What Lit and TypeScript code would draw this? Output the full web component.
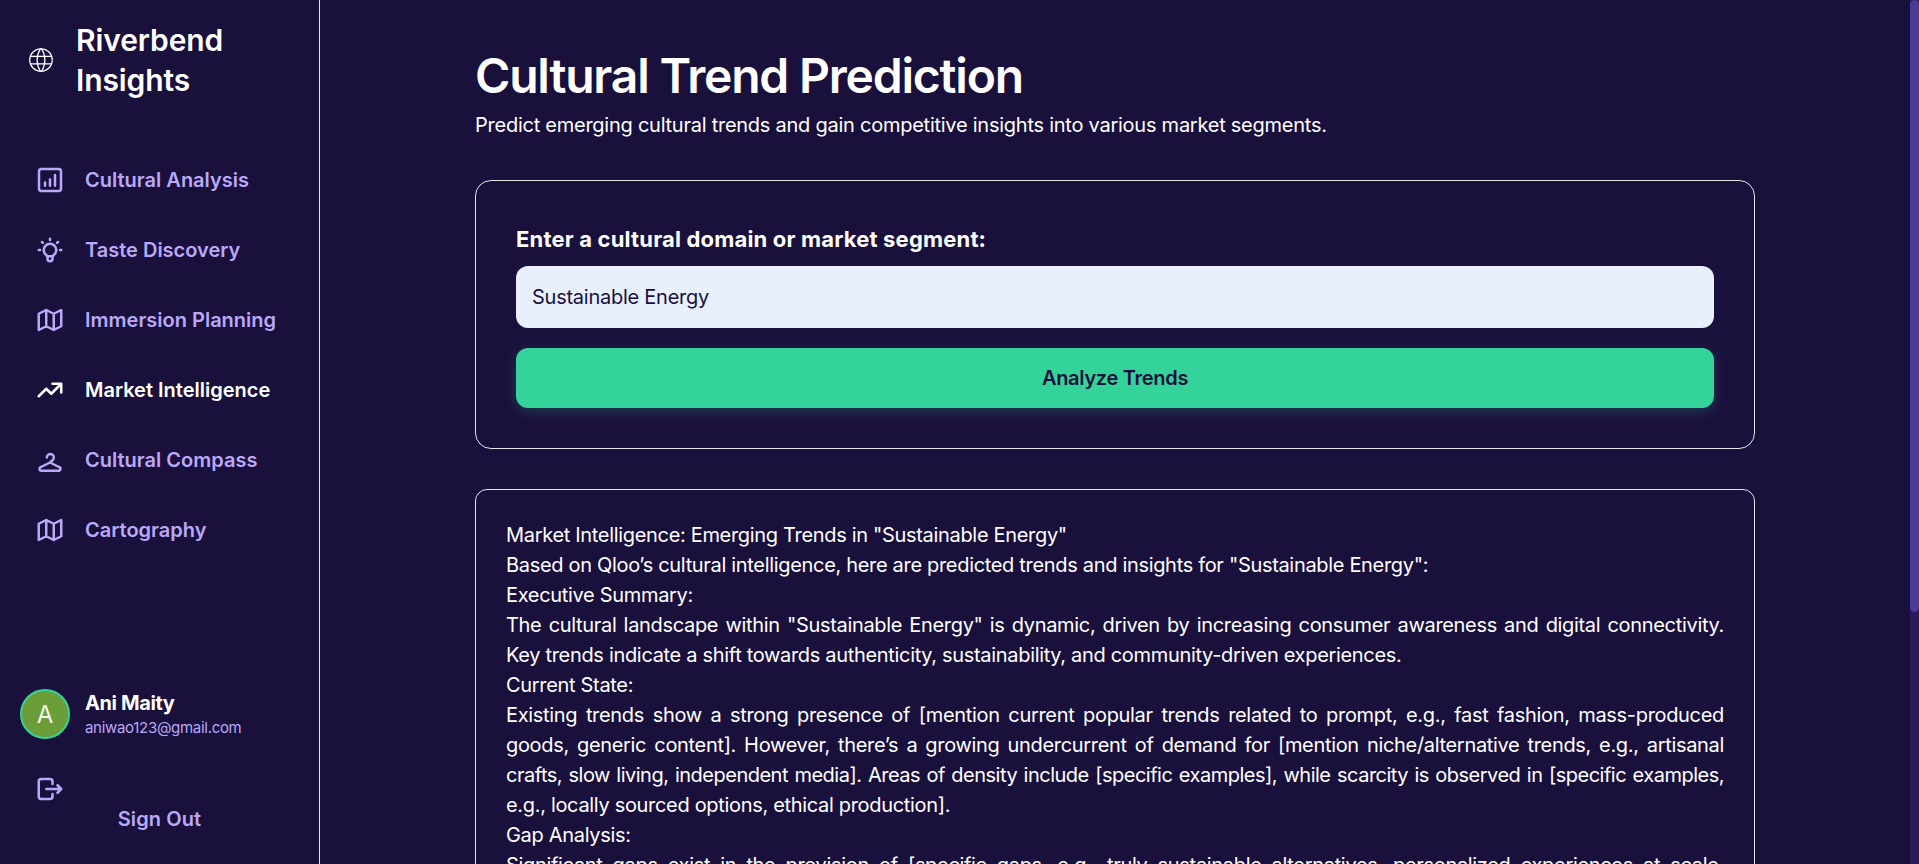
import { LitElement, css, html, svg } from "lit";
import { customElement } from "lit/decorators.js";

const icons = {
  globe: svg`<circle cx="12" cy="12" r="9"/><path d="M3.6 9h16.8M3.6 15h16.8M11.5 3a17 17 0 0 0 0 18M12.5 3a17 17 0 0 1 0 18"/>`,
  chart: svg`<rect x="3.2" y="3.2" width="17.6" height="17.6" rx="2"/><path d="M8 16.5v-2.5M12 16.5v-5M16 16.5V8"/>`,
  bulb: svg`<path d="M3 12h1m8-9v1m8 8h1M5.6 5.6l.7.7m12.1-.7-.7.7M9 16a5 5 0 1 1 6 0 3.5 3.5 0 0 0-1 3 2 2 0 0 1-4 0 3.5 3.5 0 0 0-1-3M9.7 17h4.6"/>`,
  map: svg`<path d="M3 7l6-3 6 3 6-3v13l-6 3-6-3-6 3V7M9 4v13M15 7v13"/>`,
  trend: svg`<path d="M3 17l6-6 4 4 8-8M14 7h7v7"/>`,
  hanger: svg`<path d="M9.5 10a2.8 2.8 0 1 1 4.5 2.2L12 14l-7.2 3.6a1.4 1.4 0 0 0 .6 2.9h13.2a1.4 1.4 0 0 0 .6-2.9L12 14"/>`,
  logout: svg`<path d="M14 8V6a2 2 0 0 0-2-2H5a2 2 0 0 0-2 2v12a2 2 0 0 0 2 2h7a2 2 0 0 0 2-2v-2M9 12h12l-3-3m0 6 3-3"/>`,
};

const nav = [
  { label: "Cultural Analysis", icon: icons.chart },
  { label: "Taste Discovery", icon: icons.bulb },
  { label: "Immersion Planning", icon: icons.map },
  { label: "Market Intelligence", icon: icons.trend, active: true },
  { label: "Cultural Compass", icon: icons.hanger },
  { label: "Cartography", icon: icons.map },
];

// lines are broken by hand so they wrap like the reference; fill = justified
const report = [
  { text: 'Market Intelligence: Emerging Trends in "Sustainable Energy"' },
  { text: 'Based on Qloo\u2019s cultural intelligence, here are predicted trends and insights for "Sustainable Energy":' },
  { text: "Executive Summary:" },
  { text: 'The cultural landscape within "Sustainable Energy" is dynamic, driven by increasing consumer awareness and digital connectivity.', fill: true },
  { text: "Key trends indicate a shift towards authenticity, sustainability, and community-driven experiences." },
  { text: "Current State:" },
  { text: "Existing trends show a strong presence of [mention current popular trends related to prompt, e.g., fast fashion, mass-produced", fill: true },
  { text: "goods, generic content]. However, there\u2019s a growing undercurrent of demand for [mention niche/alternative trends, e.g., artisanal", fill: true },
  { text: "crafts, slow living, independent media]. Areas of density include [specific examples], while scarcity is observed in [specific examples,", fill: true, tight: true },
  { text: "e.g., locally sourced options, ethical production]." },
  { text: "Gap Analysis:" },
  { text: "Significant gaps exist in the provision of [specific gaps, e.g., truly sustainable alternatives, personalized experiences at scale,", fill: true },
];

@customElement("app-root")
export class AppRoot extends LitElement {
  icon(body: unknown) {
    return html`<svg class="icon" viewBox="0 0 24 24">${body}</svg>`;
  }

  render() {
    return html`
      <aside class="sidebar">
        <div class="brand">
          <svg class="icon globe" viewBox="0 0 24 24">${icons.globe}</svg>
          <span class="brand-name">Riverbend Insights</span>
        </div>
        <nav class="nav">
          ${nav.map(
            (item) => html`
              <a class="nav-item ${item.active ? "active" : ""}">${this.icon(item.icon)}<span>${item.label}</span></a>
            `
          )}
        </nav>
        <div class="user">
          <div class="avatar">A</div>
          <div class="user-text">
            <div class="user-name">Ani Maity</div>
            <div class="user-mail">aniwao123@gmail.com</div>
          </div>
        </div>
        <div class="signout">
          ${this.icon(icons.logout)}
          <span class="signout-label">Sign Out</span>
        </div>
      </aside>
      <main class="main">
        <div class="content">
          <h1>Cultural Trend Prediction</h1>
          <p class="sub">Predict emerging cultural trends and gain competitive insights into various market segments.</p>
          <section class="card form">
            <label class="field-label">Enter a cultural domain or market segment:</label>
            <div class="input">Sustainable Energy</div>
            <button class="go">Analyze Trends</button>
          </section>
          <section class="card result">
            ${report.map(
              (l) => html`<div class="line ${l.fill ? "fill" : ""} ${l.tight ? "tight" : ""}">${l.text}</div>`
            )}
          </section>
        </div>
      </main>
      <div class="scrollbar"><div class="thumb"></div></div>
    `;
  }

  static styles = css`
    :host {
      display: flex;
      height: 100vh;
      overflow: hidden;
      background: #1a103c;
      color: #fff;
      font-family: Inter, "Noto Sans", sans-serif;
    }
    .icon {
      width: 30px;
      height: 30px;
      flex: none;
      fill: none;
      stroke: currentColor;
      stroke-width: 2;
      stroke-linecap: round;
      stroke-linejoin: round;
    }
    .sidebar {
      width: 320px;
      flex: none;
      box-sizing: border-box;
      border-right: 1px solid #e5e5e5;
      display: flex;
      flex-direction: column;
      padding: 20px 0 0;
    }
    .brand {
      display: flex;
      align-items: center;
      gap: 20px;
      padding-left: 26px;
      width: 240px;
    }
    .globe {
      stroke-width: 1;
    }
    .brand-name {
      font-size: 30px;
      line-height: 40px;
      font-weight: 600;
      letter-spacing: -0.1px;
    }
    .nav {
      display: flex;
      flex-direction: column;
      margin-top: 45px;
    }
    .nav-item {
      display: flex;
      align-items: center;
      gap: 20px;
      height: 70px;
      padding-left: 35px;
      font-size: 20px;
      font-weight: 600;
      color: #b9a9f8;
    }
    .nav-item.active {
      color: #fff;
    }
    .user {
      display: flex;
      align-items: center;
      gap: 15px;
      margin-top: auto;
      padding-left: 20px;
    }
    .avatar {
      width: 50px;
      height: 50px;
      box-sizing: border-box;
      border: 2px solid #34d399;
      border-radius: 50%;
      background: #6b9e38;
      display: flex;
      align-items: center;
      justify-content: center;
      font-size: 24px;
      color: #f5f5f0;
    }
    .user-name {
      font-size: 20px;
      line-height: 28px;
      font-weight: 700;
      letter-spacing: -0.4px;
    }
    .user-mail {
      font-size: 15px;
      line-height: 22px;
      color: #b9a9f8;
      letter-spacing: -0.3px;
    }
    .signout {
      display: flex;
      flex-direction: column;
      color: #b9a9f8;
      padding: 35px 0 31px;
    }
    .signout .icon {
      margin-left: 35px;
    }
    .signout-label {
      text-align: center;
      font-size: 20px;
      line-height: 28px;
      font-weight: 600;
      letter-spacing: 0.1px;
      margin-top: 1px;
    }
    .main {
      flex: 1;
      min-width: 0;
      height: 100vh;
      overflow: hidden;
    }
    .scrollbar {
      width: 9px;
      flex: none;
      background: #2a1b5e;
    }
    .thumb {
      height: 612px;
      background: #4c3a99;
      border-radius: 5px;
    }
    .content {
      max-width: 1280px;
      margin: 0 auto;
      padding: 46px 0 30px;
    }
    h1 {
      margin: 0;
      font-size: 48px;
      line-height: 60px;
      font-weight: 600;
      letter-spacing: -1.2px;
    }
    .sub {
      margin: 4px 0 0;
      font-size: 20px;
      line-height: 30px;
      letter-spacing: -0.25px;
    }
    .card {
      box-sizing: border-box;
      border: 1px solid #e5e5e5;
      border-radius: 16px;
    }
    .form {
      margin-top: 40px;
      height: 269px;
      padding: 40px;
      display: flex;
      flex-direction: column;
    }
    .field-label {
      font-size: 22px;
      line-height: 36px;
      font-weight: 700;
      letter-spacing: 0.18px;
    }
    .input {
      margin-top: 9px;
      height: 62px;
      box-sizing: border-box;
      padding: 0 16px;
      display: flex;
      align-items: center;
      border-radius: 12px;
      background: #e8f0fe;
      color: #1a103c;
      font-size: 20px;
      letter-spacing: -0.25px;
    }
    .go {
      margin-top: 20px;
      height: 60px;
      border: 0;
      border-radius: 12px;
      background: #34d399;
      color: #1a103c;
      font: 600 20px Inter, sans-serif;
      letter-spacing: -0.3px;
      box-shadow: 0 4px 14px rgba(52, 211, 153, 0.22);
    }
    .result {
      margin-top: 40px;
      min-height: 700px;
      padding: 30px;
      border-radius: 12px;
      font-size: 20px;
      line-height: 30px;
      letter-spacing: -0.32px;
    }
    .line {
      white-space: nowrap;
    }
    .line.fill {
      text-align: justify;
      text-align-last: justify;
    }
    .line.tight {
      letter-spacing: -0.5px;
    }
  `;
}
